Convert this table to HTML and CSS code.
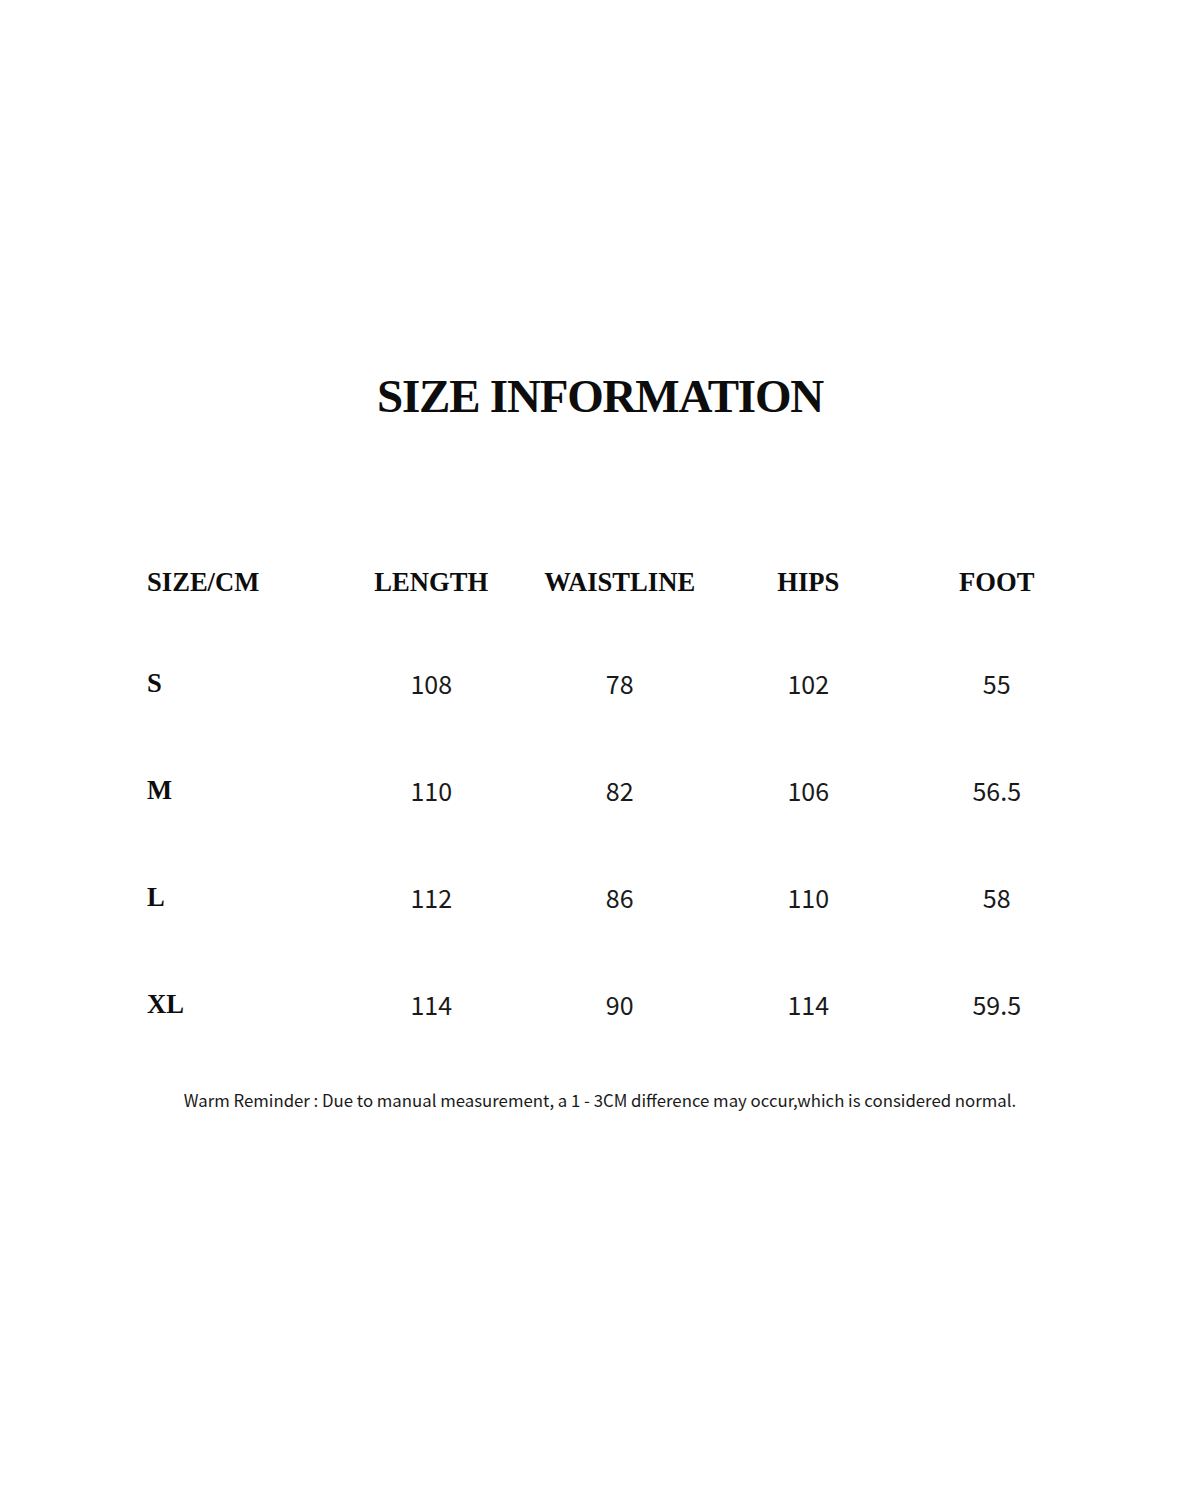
FILE: index.html
```html
<!DOCTYPE html>
<html lang="en">
<head>
<meta charset="utf-8">
<title>Size Information</title>
<link rel="stylesheet" href="styles.css">
</head>
<body>
<main class="page">
  <h1 class="title">SIZE INFORMATION</h1>
  <div class="table">
    <div class="row head">
      <div class="cell first">SIZE/CM</div>
      <div class="cell">LENGTH</div>
      <div class="cell">WAISTLINE</div>
      <div class="cell">HIPS</div>
      <div class="cell">FOOT</div>
    </div>
    <div class="row">
      <div class="cell first label">S</div>
      <div class="cell num">108</div>
      <div class="cell num">78</div>
      <div class="cell num">102</div>
      <div class="cell num">55</div>
    </div>
    <div class="row">
      <div class="cell first label">M</div>
      <div class="cell num">110</div>
      <div class="cell num">82</div>
      <div class="cell num">106</div>
      <div class="cell num">56.5</div>
    </div>
    <div class="row">
      <div class="cell first label">L</div>
      <div class="cell num">112</div>
      <div class="cell num">86</div>
      <div class="cell num">110</div>
      <div class="cell num">58</div>
    </div>
    <div class="row">
      <div class="cell first label">XL</div>
      <div class="cell num">114</div>
      <div class="cell num">90</div>
      <div class="cell num">114</div>
      <div class="cell num">59.5</div>
    </div>
  </div>
  <p class="note">Warm Reminder : Due to manual measurement, a 1 - 3CM difference may occur,which is considered normal.</p>
</main>
</body>
</html>
```

FILE: styles.css
```css
html, body {
  margin: 0;
  padding: 0;
  background: #ffffff;
}

.page {
  width: 1200px;
  height: 1500px;
  padding-top: 373px;
  box-sizing: border-box;
  color: #111111;
}

.title {
  margin: 0;
  font-family: "Liberation Serif", "Times New Roman", serif;
  font-weight: 700;
  font-size: 47px;
  line-height: 1;
  letter-spacing: -1.2px;
  text-align: center;
  color: #0d0d0d;
}

.table {
  margin-top: 114px;
  padding-left: 147px;
}

.row {
  display: grid;
  grid-template-columns: 190px 188.5px 188.5px 188.5px 188.5px;
  align-items: center;
  height: 107px;
}

.row.head {
  height: 96px;
}

.cell {
  text-align: center;
  line-height: 1;
}

.cell.first {
  text-align: left;
}

.head .cell,
.label {
  font-family: "Liberation Serif", "Times New Roman", serif;
  font-weight: 700;
  font-size: 26.6px;
  color: #0d0d0d;
}

.num {
  font-family: "Noto Sans CJK SC", "Noto Sans", sans-serif;
  font-weight: 400;
  font-size: 25px;
  color: #1a1a1a;
}

.note {
  margin: 30px 0 0;
  font-family: "Noto Sans CJK SC", "Noto Sans", sans-serif;
  font-size: 16.8px;
  line-height: 24px;
  text-align: center;
  color: #1a1a1a;
}
```
